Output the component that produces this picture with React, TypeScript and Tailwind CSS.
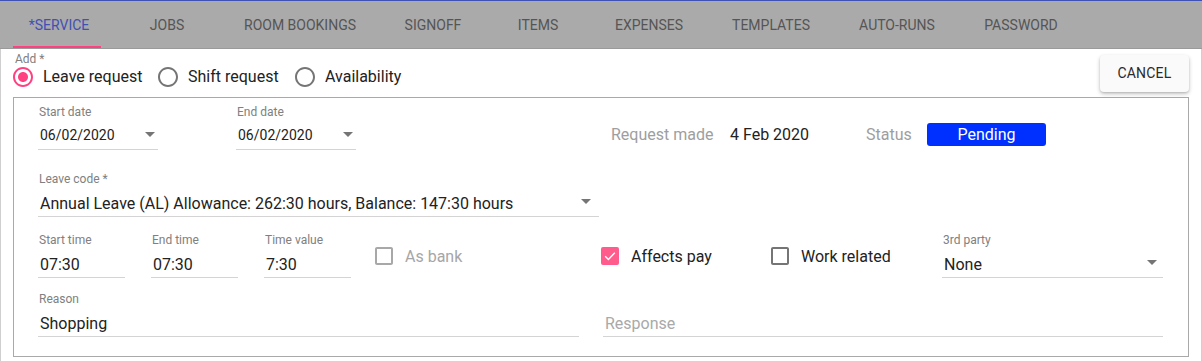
import React from "react";

const PINK = "#ff4081";

function Arrow() {
  return (
    <svg width="10" height="5" viewBox="0 0 10 5" className="shrink-0">
      <path d="M0 0l5 5 5-5z" fill="#757575" />
    </svg>
  );
}

function RadioIcon({ checked }: { checked?: boolean }) {
  return (
    <svg width="24" height="24" viewBox="0 0 24 24" className="shrink-0">
      <path
        fill={checked ? PINK : "#757575"}
        d="M12 2C6.48 2 2 6.48 2 12s4.48 10 10 10 10-4.48 10-10S17.52 2 12 2zm0 18c-4.42 0-8-3.58-8-8s3.58-8 8-8 8 3.58 8 8-3.58 8-8 8z"
      />
      {checked && (
        <path fill={PINK} d="M12 7c-2.76 0-5 2.24-5 5s2.24 5 5 5 5-2.24 5-5-2.24-5-5-5z" />
      )}
    </svg>
  );
}

function CheckIcon({ checked, disabled }: { checked?: boolean; disabled?: boolean }) {
  if (checked) {
    return (
      <svg width="24" height="24" viewBox="0 0 24 24" className="shrink-0">
        <rect x="3" y="3" width="18" height="18" rx="2" fill="#ff5c8d" />
        <path d="M7.2 12.2l3.2 3.2 6.4-6.6" fill="none" stroke="#fff" strokeWidth="1.4" />
      </svg>
    );
  }
  return (
    <svg width="24" height="24" viewBox="0 0 24 24" className="shrink-0">
      <path
        fill={disabled ? "#a8a8a8" : "#757575"}
        d="M19 5v14H5V5h14m0-2H5c-1.1 0-2 .9-2 2v14c0 1.1.9 2 2 2h14c1.1 0 2-.9 2-2V5c0-1.1-.9-2-2-2z"
      />
    </svg>
  );
}

function Field({
  label,
  value,
  className,
  small,
  arrowPad,
  placeholder,
}: {
  label?: string;
  value?: string;
  className?: string;
  small?: boolean;
  arrowPad?: string;
  placeholder?: boolean;
}) {
  return (
    <div className={"flex flex-col shrink-0 " + (className ?? "")}>
      <div className="h-[14px] text-[12px] leading-[14px] text-[#808080] pl-[1px]">{label ?? ""}</div>
      <div className="h-[31px] border-b border-[#d4d4d4] flex items-start">
        <div
          className={
            "flex-1 pl-[2px] whitespace-nowrap " +
            (small ? "pt-[8px] text-[14px] leading-[17px] " : "pt-[8px] text-[16px] leading-[19px] ") +
            (placeholder ? "text-[#a9a9a9]" : "text-[#222]")
          }
        >
          {value}
        </div>
        {arrowPad && (
          <div className={"h-full flex items-center " + arrowPad}>
            <Arrow />
          </div>
        )}
      </div>
    </div>
  );
}

function Check({
  label,
  checked,
  disabled,
  className,
}: {
  label: string;
  checked?: boolean;
  disabled?: boolean;
  className?: string;
}) {
  return (
    <div className={"flex items-center h-[24px] mt-[11px] shrink-0 " + (className ?? "")}>
      <CheckIcon checked={checked} disabled={disabled} />
      <span
        className={
          "ml-[9px] text-[16px] leading-[19px] whitespace-nowrap " +
          (disabled ? "text-[#a6a6a6]" : "text-[#222]")
        }
      >
        {label}
      </span>
    </div>
  );
}

const tabs: { label: string; w: string }[] = [
  { label: "JOBS", w: "w-[132px]" },
  { label: "ROOM BOOKINGS", w: "w-[134px]" },
  { label: "SIGNOFF", w: "w-[132px]" },
  { label: "ITEMS", w: "w-[78px]" },
  { label: "EXPENSES", w: "w-[144px]" },
  { label: "TEMPLATES", w: "w-[100px]" },
  { label: "AUTO-RUNS", w: "w-[152px]" },
  { label: "PASSWORD", w: "w-[96px]" },
];

export default function App() {
  return (
    <div className="w-[1202px] h-[361px] bg-white overflow-hidden font-['Roboto',Arial,sans-serif]">
      {/* Tab bar */}
      <div className="h-[49px] border-t border-t-[#3f51b5] border-b border-b-[#9a9a9a] bg-[#aaaaaa] flex">
        <div className="relative ml-[13px] w-[88px] h-full flex items-center justify-center pl-[4px] pt-[1px] text-[14px] text-[#3f51b5] whitespace-nowrap">
          *SERVICE
          <div className="absolute left-0 right-0 bottom-0 h-[2px] bg-[#ff4081]" />
        </div>
        {tabs.map((t) => (
          <div
            key={t.label}
            className={
              t.w + " h-full flex items-center justify-center pt-[1px] text-[14px] text-[#555] whitespace-nowrap shrink-0"
            }
          >
            {t.label}
          </div>
        ))}
      </div>

      {/* Content */}
      <div className="h-[312px] border-l border-r border-[#cfcfcf] pl-[12px] pr-[12px]">
        <div className="flex justify-between items-start pt-[4px]">
          <div className="flex flex-col">
            <div className="h-[12px] text-[12px] leading-[12px] text-[#808080] pl-[2px]">Add *</div>
            <div className="flex h-[24px] items-center -ml-[2px]">
              <div className="w-[145px] flex items-center shrink-0">
                <RadioIcon checked />
                <span className="ml-[8px] text-[16px] text-[#222] whitespace-nowrap">Leave request</span>
              </div>
              <div className="w-[137px] flex items-center shrink-0">
                <RadioIcon />
                <span className="ml-[8px] text-[16px] text-[#222] whitespace-nowrap">Shift request</span>
              </div>
              <div className="flex items-center shrink-0">
                <RadioIcon />
                <span className="ml-[8px] text-[16px] text-[#222] whitespace-nowrap">Availability</span>
              </div>
            </div>
          </div>
          <button className="mt-[2px] h-[37px] w-[89px] rounded-[4px] bg-[#fafafa] shadow-[0_2px_4px_rgba(0,0,0,0.22),0_1px_2px_rgba(0,0,0,0.12)] text-[14px] text-[#2a2a2a] tracking-[0.2px]">
            CANCEL
          </button>
        </div>

        {/* Panel */}
        <div className="mt-[5px] h-[260px] border border-[#a9a9a9] pl-[24px] pt-[7px]">
          {/* Row 1 */}
          <div className="flex">
            <Field label="Start date" value="06/02/2020" small className="w-[120px]" arrowPad="pr-[3px]" />
            <Field label="End date" value="06/02/2020" small className="w-[120px] ml-[78px]" arrowPad="pr-[3px]" />
            <div className="ml-[255px] mt-[14px] h-[31px] flex items-center text-[16px] whitespace-nowrap">
              <div className="w-[119px] text-[#9e9e9e]">Request made</div>
              <div className="w-[136px] text-[#222]">4 Feb 2020</div>
              <div className="w-[61px] text-[#9e9e9e]">Status</div>
              <div className="w-[119px] h-[23px] rounded-[3px] bg-[#0030ff] text-white flex items-center justify-center">
                Pending
              </div>
            </div>
          </div>

          {/* Row 2 */}
          <div className="flex mt-[22px]">
            <Field
              label="Leave code *"
              value="Annual Leave (AL) Allowance: 262:30 hours, Balance: 147:30 hours"
              className="w-[561px]"
              arrowPad="pr-[8px]"
            />
          </div>

          {/* Row 3 */}
          <div className="flex mt-[16px] items-start">
            <Field label="Start time" value="07:30" className="w-[87px]" />
            <Field label="End time" value="07:30" className="w-[87px] ml-[26px]" />
            <Field label="Time value" value="7:30" className="w-[87px] ml-[26px]" />
            <Check label="As bank" disabled className="ml-[21px] w-[226px]" />
            <Check label="Affects pay" checked className="w-[170px]" />
            <Check label="Work related" className="w-[174px]" />
            <Field label="3rd party" value="None" className="w-[221px]" arrowPad="pr-[6px]" />
          </div>

          {/* Row 4 */}
          <div className="flex mt-[14px]">
            <Field label="Reason" value="Shopping" className="w-[541px]" />
            <Field value="Response" placeholder className="w-[560px] ml-[24px]" />
          </div>
        </div>
      </div>
    </div>
  );
}
